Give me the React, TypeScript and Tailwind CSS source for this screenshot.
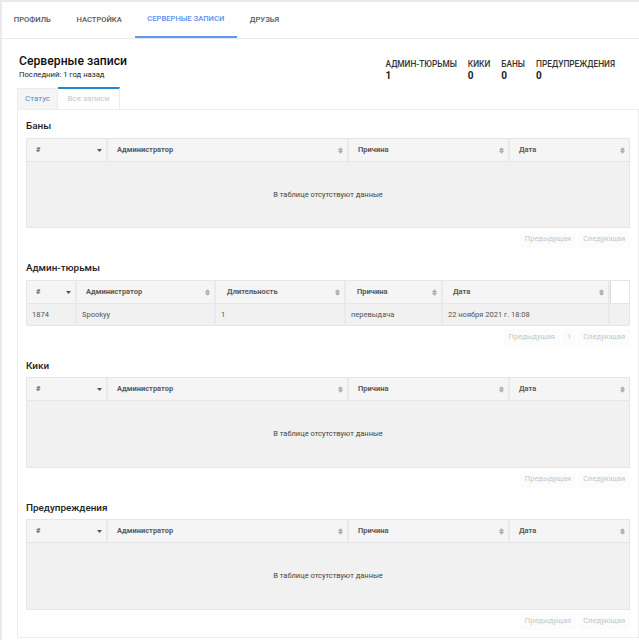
import React from "react";

const font = { fontFamily: "Roboto, 'Liberation Sans', sans-serif" };

function SortIcon({ active }: { active?: boolean }) {
  if (active) {
    return (
      <svg width="5" height="3" viewBox="0 0 5 3" className="shrink-0">
        <path d="M0 0H5L2.5 3Z" fill="#555" />
      </svg>
    );
  }
  return (
    <svg width="5" height="7" viewBox="0 0 5 7" className="shrink-0">
      <path d="M2.5 0.8L4.2 2.8H0.8Z" fill="none" stroke="#777" strokeWidth="0.7" />
      <path d="M2.5 6.2L4.2 4.2H0.8Z" fill="none" stroke="#777" strokeWidth="0.7" />
    </svg>
  );
}

type Col = { label: string; w: string; pl: string; active?: boolean };

const fourCols: Col[] = [
  { label: "#", w: "w-[81px]", pl: "pl-[9px]", active: true },
  { label: "Администратор", w: "w-[241px]", pl: "pl-[9px]" },
  { label: "Причина", w: "w-[161px]", pl: "pl-[9px]" },
  { label: "Дата", w: "flex-1", pl: "pl-[9px]" },
];

const jailCols: Col[] = [
  { label: "#", w: "w-[50px]", pl: "pl-[9px]", active: true },
  { label: "Администратор", w: "w-[139px]", pl: "pl-[9px]" },
  { label: "Длительность", w: "w-[130px]", pl: "pl-[11px]" },
  { label: "Причина", w: "w-[97px]", pl: "pl-[11px]" },
  { label: "Дата", w: "w-[167px]", pl: "pl-[10px]" },
];

function Header({ cols, extra }: { cols: Col[]; extra?: boolean }) {
  return (
    <div className="flex h-[23px] bg-[#f5f5f6] border-b border-[#e4e6ea]">
      {cols.map((c, i) => (
        <div
          key={c.label}
          className={`${c.w} ${c.pl} flex items-center justify-between pr-[4px] ${
            i < cols.length - 1 || extra ? "border-r-2 border-[#e8eaee]" : ""
          }`}
        >
          <span className="text-[7.5px] font-bold text-[#5a5a5a] leading-none">{c.label}</span>
          <SortIcon active={c.active} />
        </div>
      ))}
      {extra && <div className="flex-1 bg-white border-l border-[#dcdde0]" />}
    </div>
  );
}

function EmptyTable({ h }: { h: string }) {
  return (
    <div className="mx-[8px] border border-[#e4e6ea]">
      <Header cols={fourCols} />
      <div className={`${h} bg-[#f1f1f1] flex items-center justify-center text-[7.5px] text-[#444]`}>
        В таблице отсутствуют данные
      </div>
    </div>
  );
}

function Pager({ page, mt }: { page?: boolean; mt: string }) {
  const btn = "h-[17px] px-[5px] flex items-center bg-[#fcfcfc] text-[7.5px] text-[#c6c6c6]";
  return (
    <div className={`mx-[8px] ${mt} h-[20px] flex items-center justify-end gap-[2px]`}>
      <span className={btn}>Предыдущая</span>
      {page && <span className={btn}>1</span>}
      <span className={btn}>Следующая</span>
    </div>
  );
}

function Heading({ children, className }: { children: React.ReactNode; className: string }) {
  return (
    <h3 className={`mx-[8px] text-[9.9px] font-medium text-[#222] leading-[12px] ${className}`}>{children}</h3>
  );
}

const stats = [
  { label: "АДМИН-ТЮРЬМЫ", value: "1" },
  { label: "КИКИ", value: "0" },
  { label: "БАНЫ", value: "0" },
  { label: "ПРЕДУПРЕЖДЕНИЯ", value: "0" },
];

export default function App() {
  return (
    <div style={font} className="w-[639px] h-[640px] overflow-hidden bg-white border-t-2 border-l-2 border-[#e9e9ef]">
      <nav className="h-[37px] flex items-stretch pl-[1px] border-b border-[#e8e8ee] -ml-[2px] bg-white">
        {["ПРОФИЛЬ", "НАСТРОЙКА", "СЕРВЕРНЫЕ ЗАПИСИ", "ДРУЗЬЯ"].map((t, i) => (
          <a
            key={t}
            className={`px-[12.8px] flex items-center text-[7.6px] font-medium ${
              i === 2 ? "text-[#5c8df0] border-b-2 border-[#5c97f0]" : "text-[#555]"
            }`}
          >
            {t}
          </a>
        ))}
      </nav>
      <main className="pl-[15px]">
        <div className="flex justify-between pl-[2px] pr-[24px] pt-[15px] h-[48px]">
          <div>
            <div className="text-[12.2px] leading-[15px] font-medium text-[#111]">Серверные записи</div>
            <div className="text-[7.7px] leading-[11px] text-[#222]">Последний: 1 год назад</div>
          </div>
          <div className="flex gap-[11px] pt-[5px]">
            {stats.map((s) => (
              <div key={s.label}>
                <div className="text-[8.3px] leading-[10px] font-medium text-[#333]">{s.label}</div>
                <div className="text-[10px] leading-[13px] font-bold text-[#222]">{s.value}</div>
              </div>
            ))}
          </div>
        </div>
        <div className="flex h-[22px] items-end">
          <div className="h-[21px] w-[41px] bg-[#f5f5f6] border border-b-0 border-[#ececef] text-[8px] text-[#5a8cc0] flex items-center justify-center">
            Статус
          </div>
          <div className="h-[22px] w-[62px] bg-white border-t-2 border-t-[#1e88d8] border-r border-r-[#ececef] text-[8px] text-[#c4c8cc] flex items-center justify-center">
            Все записи
          </div>
        </div>
        <div className="border border-[#ececef] h-[529px]">
          <Heading className="mt-[10px] mb-[6px]">Баны</Heading>
          <EmptyTable h="h-[65px]" />
          <Pager mt="mt-[1px]" />
          <Heading className="mt-[13px] mb-[6px]">Админ-тюрьмы</Heading>
          <div className="mx-[8px] border border-[#e4e6ea]">
            <Header cols={jailCols} extra />
            <div className="flex h-[21px] bg-[#f1f1f1] text-[7.5px] text-[#555]">
              {["1874", "Spookyy", "1", "перевыдача", "22 ноября 2021 г. 18:08", ""].map((v, i) => (
                <div
                  key={i}
                  className={`${["w-[50px]", "w-[139px]", "w-[130px]", "w-[97px]", "w-[167px]", "flex-1"][i]} pl-[5px] flex items-center ${
                    i < 5 ? "border-r-2 border-[#e8eaee]" : ""
                  }`}
                >
                  {v}
                </div>
              ))}
            </div>
          </div>
          <Pager page mt="mt-[1px]" />
          <Heading className="mt-[13px] mb-[5px]">Кики</Heading>
          <EmptyTable h="h-[66px]" />
          <Pager mt="mt-[1px]" />
          <Heading className="mt-[13px] mb-[5px]">Предупреждения</Heading>
          <EmptyTable h="h-[66px]" />
          <Pager mt="mt-[1px]" />
        </div>
      </main>
    </div>
  );
}
